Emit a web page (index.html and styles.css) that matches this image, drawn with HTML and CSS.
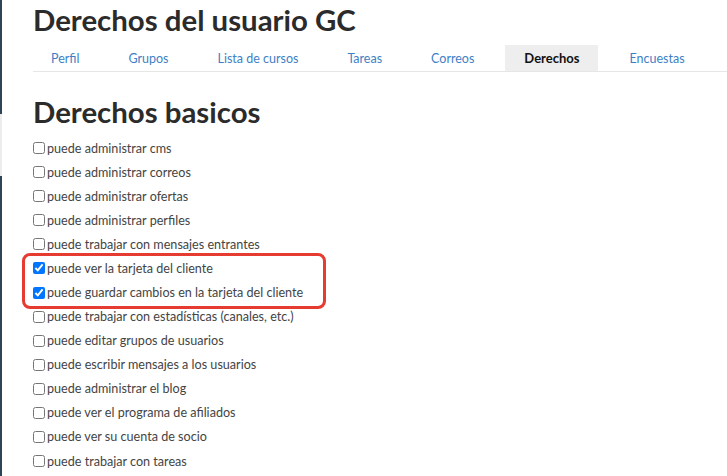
FILE: index.html
```html
<!DOCTYPE html>
<html lang="es">
<head>
<meta charset="utf-8">
<title>Derechos del usuario GC</title>
<link rel="stylesheet" href="styles.css">
</head>
<body>
<div class="edge"><span class="edge-dark"></span><span class="edge-light"></span><span class="edge-dark2"></span></div>
<main class="page">
  <h1 class="title">Derechos del usuario GC</h1>
  <nav class="tabs">
    <a class="tab">Perfil</a>
    <a class="tab">Grupos</a>
    <a class="tab">Lista de cursos</a>
    <a class="tab">Tareas</a>
    <a class="tab">Correos</a>
    <a class="tab active">Derechos</a>
    <a class="tab">Encuestas</a>
  </nav>
  <h2 class="section">Derechos basicos</h2>
  <div class="rights">
    <label class="right"><input type="checkbox"> puede administrar cms</label>
    <label class="right"><input type="checkbox"> puede administrar correos</label>
    <label class="right"><input type="checkbox"> puede administrar ofertas</label>
    <label class="right"><input type="checkbox"> puede administrar perfiles</label>
    <label class="right"><input type="checkbox"> puede trabajar con mensajes entrantes</label>
    <div class="highlight-group">
      <label class="right"><input type="checkbox" checked> puede ver la tarjeta del cliente</label>
      <label class="right"><input type="checkbox" checked> puede guardar cambios en la tarjeta del cliente</label>
      <span class="highlight"></span>
    </div>
    <label class="right"><input type="checkbox"> puede trabajar con estadísticas (canales, etc.)</label>
    <label class="right"><input type="checkbox"> puede editar grupos de usuarios</label>
    <label class="right"><input type="checkbox"> puede escribir mensajes a los usuarios</label>
    <label class="right"><input type="checkbox"> puede administrar el blog</label>
    <label class="right"><input type="checkbox"> puede ver el programa de afiliados</label>
    <label class="right"><input type="checkbox"> puede ver su cuenta de socio</label>
    <label class="right"><input type="checkbox"> puede trabajar con tareas</label>
  </div>
</main>
</body>
</html>
```

FILE: styles.css
```css
html, body {
  margin: 0;
  padding: 0;
  background: #fff;
}
body {
  font-family: Lato, "Open Sans", Arial, sans-serif;
  color: #333;
  overflow: hidden;
  height: 476px;
  position: relative;
}
.edge {
  position: absolute;
  left: 0;
  top: 0;
  bottom: 0;
  width: 2px;
  display: flex;
  flex-direction: column;
}
.edge-dark { height: 114px; background: #2d4356; }
.edge-light { height: 62px; background: #ececec; }
.edge-dark2 { flex: 1; background: #2d4356; }

.page {
  padding: 0 0 0 33px;
}
.title {
  margin: 0;
  padding-top: 2px;
  font-size: 29.4px;
  line-height: 36px;
  font-weight: 700;
  color: #2b2b2b;
}
.tabs {
  display: flex;
  gap: 13px;
  margin-top: 7px;
  height: 26px;
  border-bottom: 1px solid #e6e6e6;
}
.tab {
  padding: 1px 18px 0;
  font-size: 12.5px;
  line-height: 25px;
  color: #3e7fc6;
}
.tab.active {
  background: #eeeeee;
  color: #111;
  font-weight: 700;
  font-size: 13px;
  padding: 1px 19px 0;
}
.section {
  margin: 0;
  padding-top: 22px;
  font-size: 29.4px;
  line-height: 36px;
  font-weight: 700;
  color: #2b2b2b;
}
.rights {
  margin-top: 6px;
  display: flex;
  flex-direction: column;
}
.highlight-group {
  position: relative;
  display: flex;
  flex-direction: column;
}
.right {
  display: flex;
  align-items: center;
  height: 24.08px;
  font-size: 12.6px;
  color: #444;
}
.right input {
  margin: 0 2px 0 0;
  width: 12px;
  height: 12px;
  flex: none;
}
.highlight {
  position: absolute;
  left: -11px;
  top: -3px;
  box-sizing: border-box;
  width: 304px;
  height: 56px;
  border: 3.5px solid #e53b30;
  border-radius: 8px;
}
```
